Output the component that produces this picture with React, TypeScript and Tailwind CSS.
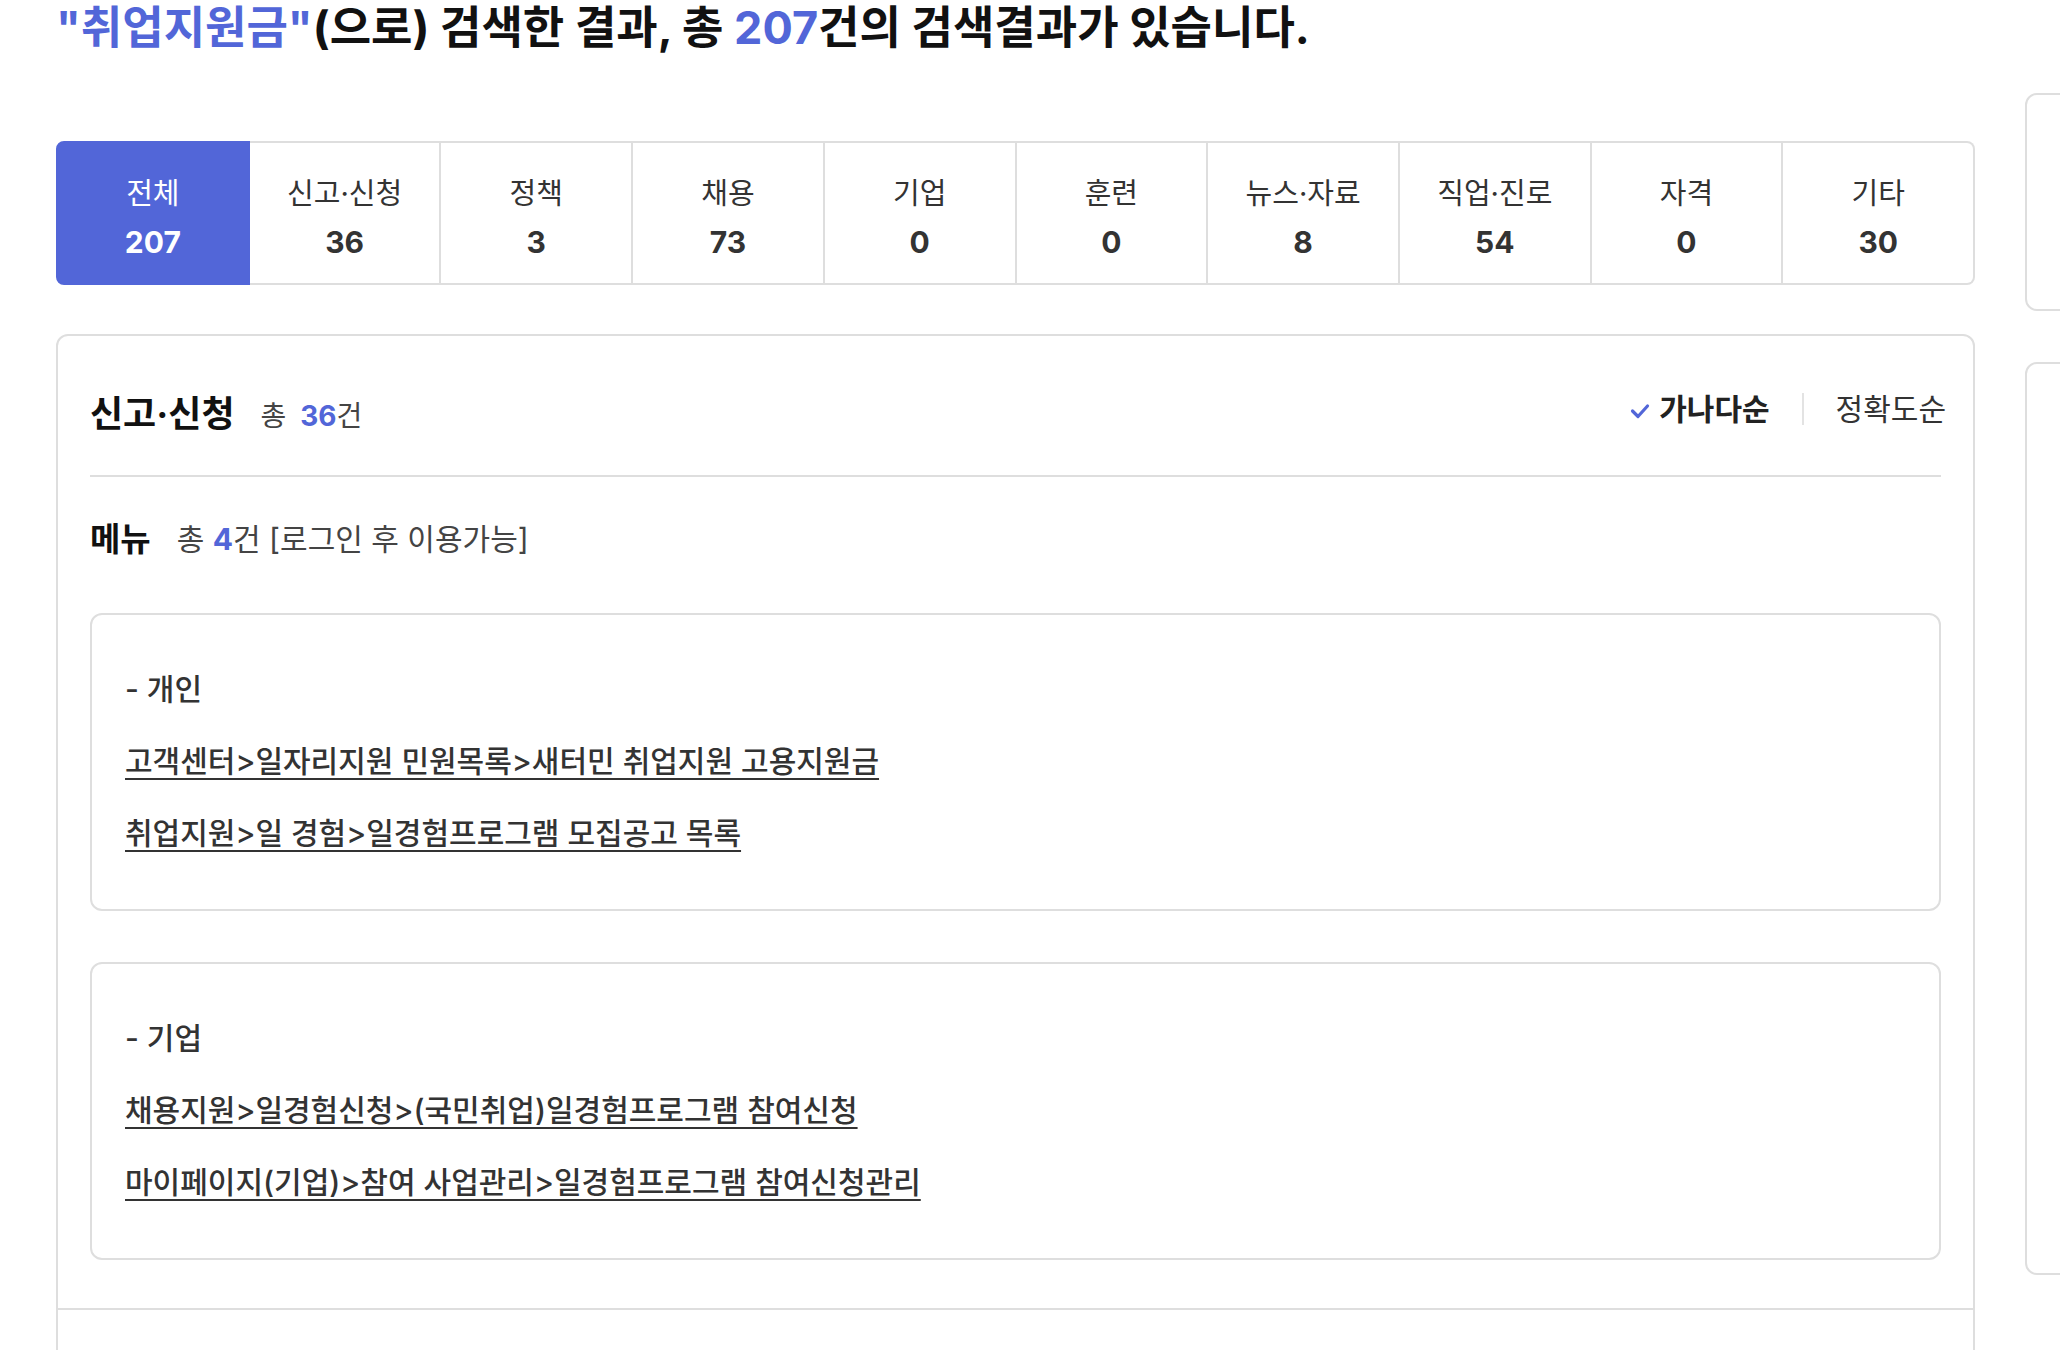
import React from "react"

const tabs = [
  { label: "전체", count: 207 },
  { label: "신고·신청", count: 36 },
  { label: "정책", count: 3 },
  { label: "채용", count: 73 },
  { label: "기업", count: 0 },
  { label: "훈련", count: 0 },
  { label: "뉴스·자료", count: 8 },
  { label: "직업·진로", count: 54 },
  { label: "자격", count: 0 },
  { label: "기타", count: 30 },
]

const groups = [
  {
    title: "- 개인",
    links: [
      "고객센터>일자리지원 민원목록>새터민 취업지원 고용지원금",
      "취업지원>일 경험>일경험프로그램 모집공고 목록",
    ],
  },
  {
    title: "- 기업",
    links: [
      "채용지원>일경험신청>(국민취업)일경험프로그램 참여신청",
      "마이페이지(기업)>참여 사업관리>일경험프로그램 참여신청관리",
    ],
  },
]

function TabBar() {
  return (
    <div className="mt-[85px] flex h-[144px]">
      {tabs.map((t, i) => {
        const active = i === 0
        return (
          <div
            key={t.label}
            className={`flex flex-1 flex-col items-center justify-center border-y-2 border-r-2 pt-[10px] ${
              i === 0 ? "rounded-l-lg border-l-2" : ""
            } ${i === tabs.length - 1 ? "rounded-r-lg" : ""} ${
              active ? "border-[#5266d8] bg-[#5266d8] text-white" : "border-[#dedede] bg-white text-[#333]"
            }`}
          >
            <span className="text-[29px] leading-[36px]">{t.label}</span>
            <span className="mt-[12px] text-[30px] font-bold leading-[36px]">{t.count}</span>
          </div>
        )
      })}
    </div>
  )
}

function MenuCard({ title, links }: { title: string; links: string[] }) {
  return (
    <div className="rounded-xl border-2 border-[#dedede] px-[33px] pt-[56px] pb-[58px]">
      <p className="text-[30px] font-medium leading-[36px] text-[#333]">{title}</p>
      {links.map((l) => (
        <a
          key={l}
          href="#"
          className="mt-[36px] block w-fit text-[30px] font-medium leading-[36px] text-[#333] underline decoration-2 underline-offset-[6px]"
        >
          {l}
        </a>
      ))}
    </div>
  )
}

function ResultPanel() {
  return (
    <div className="mt-[49px] rounded-xl border-2 border-[#dedede] bg-white">
      <div className="border-b-2 border-[#dedede] px-[32px] pb-[48px]">
        <div className="flex items-center justify-between border-b-2 border-[#dedede] pt-[55px] pb-[38px]">
          <div className="flex items-center gap-[26px] leading-[42px]">
            <h3 className="text-[36px] font-bold text-[#111]">신고·신청</h3>
            <span className="mt-[4px] text-[28px] text-[#444]">
              총 <b className="ml-[6px] font-bold text-[#5266d8]">36</b>건
            </span>
          </div>
          <div className="-mr-[5px] -mt-[10px] flex items-center text-[30px] leading-[36px]">
            <svg width="20" height="16" viewBox="0 0 20 16" className="mr-[9px] mt-[4px]">
              <polyline points="2.5,8 8,13.5 17.5,3" fill="none" stroke="#5266d8" strokeWidth="3.2" strokeLinecap="round" strokeLinejoin="round" />
            </svg>
            <span className="font-semibold text-[#222]">가나다순</span>
            <span className="mx-[32px] h-[32px] w-[2px] bg-[#e3e3e3]" />
            <span className="text-[#333]">정확도순</span>
          </div>
        </div>

        <div className="mt-[44px] flex items-center gap-[26px] leading-[36px]">
          <h4 className="text-[33px] font-bold text-[#111]">메뉴</h4>
          <span className="text-[30px] text-[#444]">
            총 <b className="font-bold text-[#5266d8]">4</b>건 [로그인 후 이용가능]
          </span>
        </div>

        <div className="mt-[56px] flex flex-col gap-[51px]">
          {groups.map((g) => (
            <MenuCard key={g.title} title={g.title} links={g.links} />
          ))}
        </div>
      </div>
      <div className="h-[200px]" />
    </div>
  )
}

export default function App() {
  return (
    <div className="flex h-[1350px] w-[2060px] overflow-hidden bg-white pl-[56px] font-['Inter','Noto_Sans_CJK_KR',sans-serif]">
      <main className="w-[1919px] shrink-0">
        <h2 className="text-[45px] font-bold leading-[56px] text-[#111]">
          <span className="text-[#5266d8]">"취업지원금"</span>(으로) 검색한 결과, 총{" "}
          <span className="text-[#5266d8]">207</span>건의 검색결과가 있습니다.
        </h2>
        <TabBar />
        <ResultPanel />
      </main>
      <aside className="ml-[50px] w-[320px] shrink-0 pt-[93px]">
        <div className="h-[218px] rounded-xl border-2 border-[#dedede]" />
        <div className="mt-[51px] h-[913px] rounded-xl border-2 border-[#dedede]" />
      </aside>
    </div>
  )
}
